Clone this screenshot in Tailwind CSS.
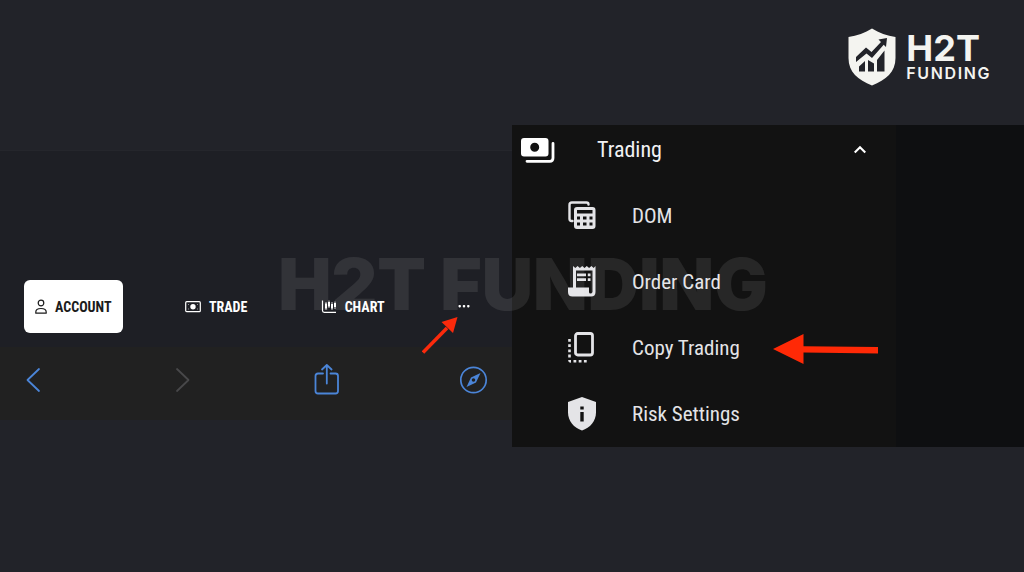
<!DOCTYPE html>
<html lang="en">
<head>
  <meta charset="UTF-8">
  <meta name="viewport" content="width=device-width, initial-scale=1.0">
  <title>H2T Funding - Copy Trading</title>
  <script src="https://cdn.jsdelivr.net/npm/@tailwindcss/browser@4"></script>
</head>
<body class="relative min-h-screen overflow-x-hidden bg-[#222329] font-['Roboto_Condensed','Liberation_Sans_Narrow',Roboto,sans-serif] text-white">
  <!-- Brand -->
  <header class="flex h-[125px] justify-end pt-7 pr-[33px]">
    <a href="#" class="flex h-[58px] items-center gap-2.5 font-[Inter,sans-serif] text-[#f4f4f0]">
      <svg class="h-[58px] w-12" viewBox="0 0 48 58" aria-hidden="true">
        <path fill="currentColor" d="M24 0.500C31 5 39 7.500 47.500 9V30C47.500 44 38 52 24 57.500C10 52 0.500 44 0.500 30V9C9 7.500 17 5 24 0.500Z"/>
        <path fill="#222329" d="M11 38.500L17 33V43.500H11ZM20 32L26 35.500V43.500H20ZM29 32L36.500 22.500V43.500H29Z"/>
        <path fill="#222329" d="M8 29L18 19.500L23.500 24L33 14L30.500 11.500L39 10L38 19L35.700 16.700L24 30L18.500 25.500L8 34Z"/>
      </svg>
      <span class="flex flex-col">
        <span class="text-4xl leading-8 font-bold">H2T</span>
        <span class="text-base leading-[18px] font-semibold tracking-widest">FUNDING</span>
      </span>
    </a>
  </header>

  <main class="grid grid-cols-2 items-start">
    <!-- Mobile browser bottom bar -->
    <section class="relative mt-[25px] border-t border-[#25262c] bg-[#1e1f25]">
      <nav class="flex items-center justify-between pt-[129px] pr-[31px] pb-[14px] pl-6 text-sm font-bold">
        <button class="flex h-[53px] items-center gap-2 rounded-md bg-white px-[11px] text-[#1b1b1b]">
          <svg class="h-4 w-3" viewBox="0 0 12 16" fill="none" stroke="currentColor" stroke-width="1.200" aria-hidden="true">
            <circle cx="6" cy="4" r="2.800"/>
            <path stroke-linejoin="round" d="M0.800 14.200V13C0.800 10.800 3 9.500 6 9.500S11.200 10.800 11.200 13V14.200Z"/>
          </svg>
          ACCOUNT
        </button>
        <button class="flex h-[53px] items-center gap-2 px-[11px]">
          <svg class="h-4 w-4" viewBox="0 0 16 16" aria-hidden="true">
            <rect x="0.700" y="2.700" width="14.600" height="10" rx="1" fill="none" stroke="currentColor" stroke-width="1.200"/>
            <circle cx="8" cy="7.700" r="2.700" fill="currentColor"/>
            <path fill="currentColor" d="M3 5H4V6H3ZM12 5H13V6H12ZM3 9.500H4V10.500H3ZM12 9.500H13V10.500H12Z" opacity="0.500"/>
          </svg>
          TRADE
        </button>
        <button class="flex h-[53px] items-center gap-2 px-[11px]">
          <svg class="h-4 w-4" viewBox="0 0 16 16" fill="none" stroke="currentColor" aria-hidden="true">
            <path stroke-width="1.200" d="M1.500 1.500V11.500Q1.500 13.300 3.300 13.300H15"/>
            <path stroke-width="0.800" d="M5 3V11M8 1.500V9M11 3V11M14 2.500V10"/>
            <path stroke-width="2" d="M5 4.500V9.500M8 3V7.500M11 5V9.500M14 4V8"/>
          </svg>
          CHART
        </button>
        <button class="flex h-[53px] items-center px-[11px]" aria-label="More">
          <svg class="h-4 w-3" viewBox="0 0 12 16" fill="currentColor" aria-hidden="true">
            <rect x="0.500" y="6" width="2.400" height="2.400" rx="0.800"/>
            <rect x="4.800" y="6" width="2.400" height="2.400" rx="0.800"/>
            <rect x="9.100" y="6" width="2.400" height="2.400" rx="0.800"/>
          </svg>
        </button>
      </nav>

      <div class="flex items-start justify-between bg-[#212121] pt-4 pr-6 pb-[25px] pl-5 text-[#4b85d8]">
        <button aria-label="Back">
          <svg class="h-8 w-7" viewBox="0 0 28 32" fill="none" stroke="currentColor" stroke-width="1.800" stroke-linecap="round" stroke-linejoin="round" aria-hidden="true">
            <path d="M19 6L7.500 17L19 28"/>
          </svg>
        </button>
        <button class="text-[#48484a]" aria-label="Forward">
          <svg class="h-8 w-7" viewBox="0 0 28 32" fill="none" stroke="currentColor" stroke-width="1.800" stroke-linecap="round" stroke-linejoin="round" aria-hidden="true">
            <path d="M10 6L21.500 17L10 28"/>
          </svg>
        </button>
        <button aria-label="Share">
          <svg class="h-8 w-7" viewBox="0 0 28 32" fill="none" stroke="currentColor" stroke-width="1.800" stroke-linecap="round" stroke-linejoin="round" aria-hidden="true">
            <path d="M10 10.500H5Q2.500 10.500 2.500 13V28Q2.500 30.500 5 30.500H22.500Q25 30.500 25 28V13Q25 10.500 22.500 10.500H17.500"/>
            <path d="M13.800 20.500V2M9 6.500L13.800 2L18.600 6.500"/>
          </svg>
        </button>
        <button aria-label="Open in browser">
          <svg class="h-8 w-7" viewBox="0 0 28 32" aria-hidden="true">
            <circle cx="13.500" cy="17" r="12.700" fill="none" stroke="currentColor" stroke-width="1.700"/>
            <path fill="currentColor" fill-rule="evenodd" d="M20.500 10L16 19.500L6.500 24L11 14.500ZM13.500 15.200A1.800 1.800 0 1 0 13.500 18.800A1.800 1.800 0 1 0 13.500 15.200Z"/>
          </svg>
        </button>
      </div>

      <!-- Pointer to the "more" button -->
      <svg class="absolute right-[54px] bottom-[66px] h-[38px] w-9" viewBox="0 0 36 38" aria-hidden="true">
        <path stroke="#fb2a0c" stroke-width="3.500" d="M1 36.500L25 12"/>
        <path fill="#fb2a0c" d="M35.500 1L31 17L19.500 6Z"/>
      </svg>
    </section>

    <!-- Side menu -->
    <section class="flex bg-[#0e0f11]">
      <nav class="w-3/4 bg-[#121212] text-[21px] leading-[34px] whitespace-nowrap text-[#e4e4e7]">
        <button class="mb-2 flex h-[50px] w-full items-center pr-[30px] pl-2 text-left" aria-expanded="true">
          <svg class="h-7 w-[35px] text-white" viewBox="0 0 35 28" aria-hidden="true">
            <path fill="currentColor" fill-rule="evenodd" d="M4 2H25.500Q28.500 2 28.500 5V17.500Q28.500 20.500 25.500 20.500H4Q1 20.500 1 17.500V5Q1 2 4 2ZM14.700 6.800A4.500 4.500 0 1 0 14.700 15.800A4.500 4.500 0 1 0 14.700 6.800Z"/>
            <path fill="none" stroke="currentColor" stroke-width="2.800" stroke-linecap="round" d="M33 7.500V22Q33 25.300 29.700 25.300H7"/>
          </svg>
          <span class="ml-[42px] text-[22px] text-[#f1f1f3]">Trading</span>
          <svg class="ml-auto h-3 w-3 text-white" viewBox="0 0 12 12" fill="none" stroke="currentColor" stroke-width="2.200" aria-hidden="true">
            <path d="M0.700 8.500L6 3.200L11.300 8.500"/>
          </svg>
        </button>
        <ul>
          <li>
            <a href="#" class="flex h-[66px] items-center pl-14">
              <svg class="h-8 w-7" viewBox="0 0 28 32" aria-hidden="true">
                <path fill="none" stroke="currentColor" stroke-width="2.400" stroke-linecap="round" d="M4.500 21H3.500Q1.500 21 1.500 19V5Q1.500 2.500 4 2.500H18.500Q20.500 2.500 20.500 4.500"/>
                <path fill="currentColor" fill-rule="evenodd" d="M9 7H24.500Q27.500 7 27.500 10V26Q27.500 29 24.500 29H9Q6 29 6 26V10Q6 7 9 7ZM9 10V13.500H24.500V10ZM9 16.500V19.500H12V16.500ZM15 16.500V19.500H18.500V16.500ZM21.500 16.500V19.500H24.500V16.500ZM9 22.500V25.500H12V22.500ZM15 22.500V25.500H18.500V22.500ZM21.500 22.500V25.500H24.500V22.500Z"/>
              </svg>
              <span class="ml-9">DOM</span>
            </a>
          </li>
          <li>
            <a href="#" class="flex h-[66px] items-center pl-14">
              <svg class="h-8 w-7" viewBox="0 0 28 32" aria-hidden="true">
                <path fill="currentColor" fill-rule="evenodd" d="M5 0L7.300 2L9.600 0L11.900 2L14.200 0L16.500 2L18.800 0L21.100 2L23.400 0L25.700 2L27.500 0V26Q27.500 30.500 23 30.500H4.500Q0 30.500 0 26V21.500H5ZM8 4.500V21.500H21V26Q21 27.500 22.500 27.500T24.500 26V4.500Z"/>
                <path fill="currentColor" d="M9 7.500H18V10.200H9ZM19.800 7.500H22.500V10.200H19.800ZM9 12.300H18V15H9ZM19.800 12.300H22.500V15H19.800Z"/>
              </svg>
              <span class="ml-9">Order Card</span>
            </a>
          </li>
          <li>
            <a href="#" class="flex h-[66px] items-center pl-14">
              <svg class="h-8 w-7 shrink-0" viewBox="0 0 28 32" fill="none" stroke="currentColor" aria-hidden="true">
                <rect x="7.500" y="1.500" width="17" height="21.500" rx="2.200" stroke-width="2.800"/>
                <path stroke-width="2.600" stroke-dasharray="2.800 2.400" d="M1.500 7V27M5.500 29.300H20"/>
                <path fill="currentColor" stroke="none" d="M0.200 28H3V30.700Q0.200 30.700 0.200 28Z"/>
              </svg>
              <span class="ml-9">Copy Trading</span>
              <svg class="mr-[18px] ml-auto h-8 w-[105px] shrink-0" viewBox="0 0 105 32" fill="#ff2906" aria-hidden="true">
                <path d="M0 17L30.500 2V14.300L105 15V21.500L30.500 20.500V32Z"/>
              </svg>
            </a>
          </li>
          <li>
            <a href="#" class="flex h-[66px] items-center pl-14">
              <svg class="h-[34px] w-7" viewBox="0 0 28 34" aria-hidden="true">
                <path fill="currentColor" d="M14 0L28 5V15.500C28 24 22 31 14 33.500C6 31 0 24 0 15.500V5Z"/>
                <path fill="#121212" d="M12.300 9.500H15.700V12.500H12.300ZM12.300 15H15.700V24.500H12.300Z"/>
              </svg>
              <span class="ml-9">Risk Settings</span>
            </a>
          </li>
        </ul>
      </nav>
    </section>
  </main>

  <!-- Watermark -->
  <p class="pointer-events-none absolute top-[231px] right-0 left-[22px] text-center font-[Inter,sans-serif] text-[71px] font-black text-white/9">H2T FUNDING</p>
</body>
</html>
